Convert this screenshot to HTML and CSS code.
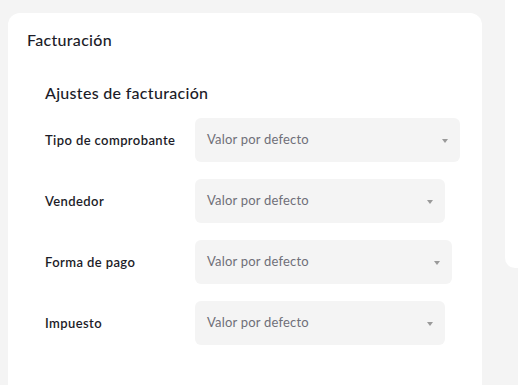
FILE: index.html
```html
<!DOCTYPE html>
<html lang="es">
<head>
    <meta charset="UTF-8">
    <meta name="viewport" content="width=device-width, initial-scale=1.0">
    <title>Facturación</title>
    <link rel="stylesheet" href="styles.css">
</head>
<body>
    <div class="page">
        <div class="card">
            <h2 class="card-title">Facturación</h2>
            <div class="section">
                <h3 class="section-title">Ajustes de facturación</h3>
                <div class="field">
                    <label>Tipo de comprobante</label>
                    <div class="select w265">Valor por defecto<span class="arrow"></span></div>
                </div>
                <div class="field">
                    <label>Vendedor</label>
                    <div class="select w250">Valor por defecto<span class="arrow"></span></div>
                </div>
                <div class="field">
                    <label>Forma de pago</label>
                    <div class="select w257">Valor por defecto<span class="arrow"></span></div>
                </div>
                <div class="field">
                    <label>Impuesto</label>
                    <div class="select w250">Valor por defecto<span class="arrow"></span></div>
                </div>
            </div>
        </div>
        <div class="side-card"></div>
    </div>
</body>
</html>
```

FILE: styles.css
```css
body {
    font-family: Lato, "Noto Sans", sans-serif;
    background-color: #f4f4f4;
    margin: 0;
    padding: 0;
    color: #1c1c28;
}
.page {
    display: flex;
    align-items: flex-start;
    gap: 23px;
    padding: 13px 0 0 8px;
    height: 385px;
    box-sizing: border-box;
    overflow: hidden;
}
.card {
    background-color: #ffffff;
    border-radius: 12px;
    width: 474px;
    flex-shrink: 0;
    height: 400px;
    padding: 17px 19px 0 19px;
    box-sizing: border-box;
}
.card-title {
    font-size: 16px;
    font-weight: 500;
    letter-spacing: 0.3px;
    margin: 0;
    line-height: 20px;
}
.section {
    padding: 33px 0 0 18px;
}
.section-title {
    font-size: 16px;
    font-weight: 500;
    letter-spacing: 0.3px;
    margin: 0 0 15px 0;
    line-height: 20px;
}
.field {
    display: flex;
    align-items: center;
    margin-bottom: 17px;
}
.field label {
    width: 150px;
    font-size: 13px;
    font-weight: 600;
    letter-spacing: 0.4px;
    padding-bottom: 1px;
}
.select {
    position: relative;
    height: 44px;
    background-color: #f4f4f4;
    border-radius: 6px;
    box-sizing: border-box;
    padding: 0 12px 2px 12px;
    display: flex;
    align-items: center;
    font-size: 13px;
    letter-spacing: 0.2px;
    color: #6f6f78;
}
.w265 { width: 265px; }
.w250 { width: 250px; }
.w257 { width: 257px; }
.arrow {
    position: absolute;
    right: 12px;
    top: 21px;
    width: 0;
    height: 0;
    border-left: 3.5px solid transparent;
    border-right: 3.5px solid transparent;
    border-top: 4px solid #9a9a9a;
}
.side-card {
    flex: 1;
    height: 268px;
    margin-top: -13px;
    background-color: #ffffff;
    border-radius: 0 0 0 10px;
}
```
